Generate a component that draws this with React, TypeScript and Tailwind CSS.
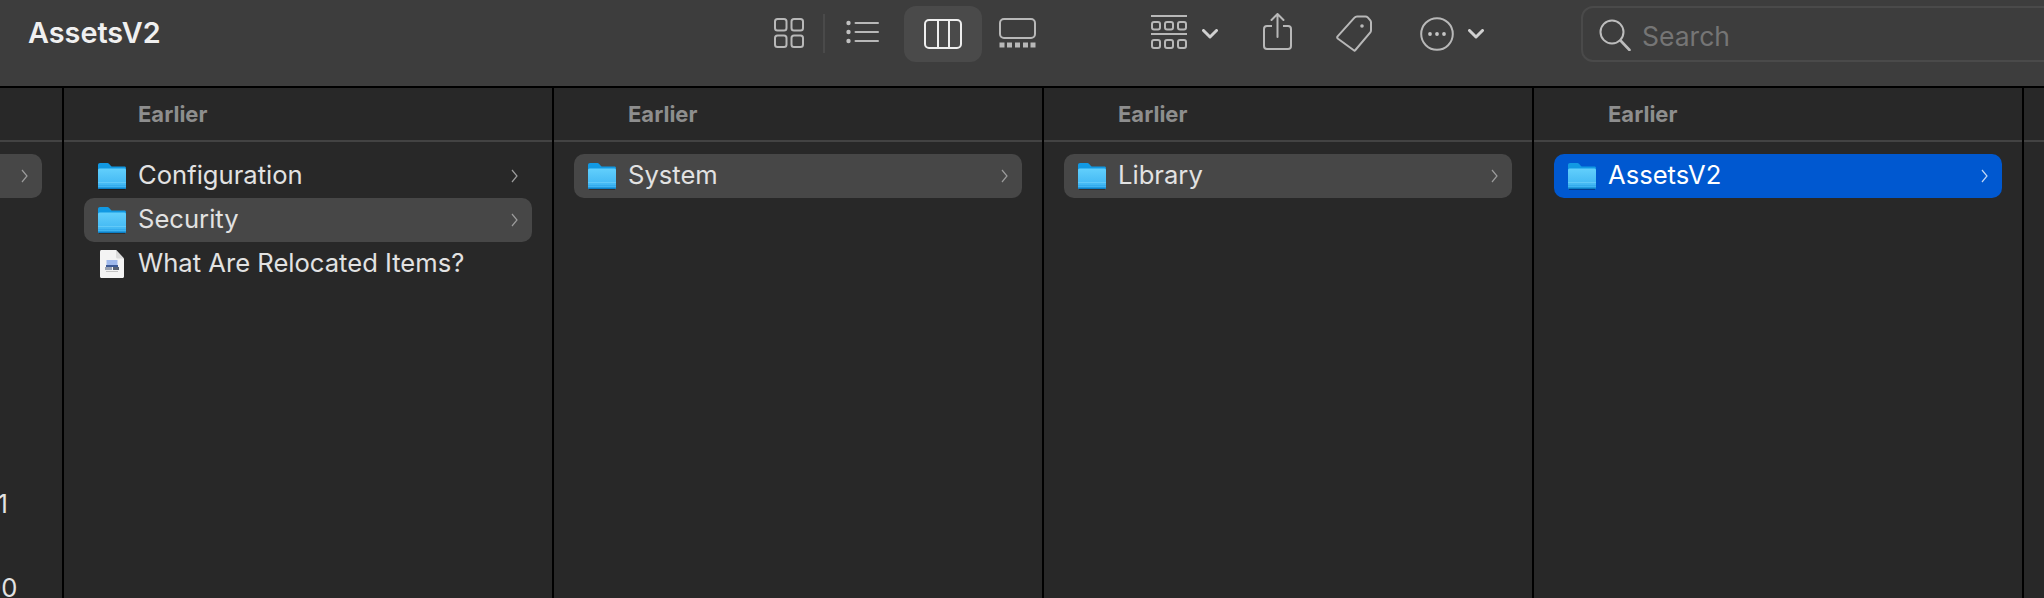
const FONT = "font-['Inter','Liberation_Sans',sans-serif]"

function FolderIcon() {
  return (
    <svg width="28" height="27" viewBox="0 0 28 27" className="shrink-0">
      <defs>
        <linearGradient id="folderBody" x1="0" y1="0" x2="0" y2="1">
          <stop offset="0" stopColor="#62cffc" />
          <stop offset="1" stopColor="#3ab2f1" />
        </linearGradient>
      </defs>
      <path d="M0 2.200C0 .9.8 0 2 0h7c1 0 1.500.4 2.200 1l1.800 1.900c.4.4.8.5 1.400.5H26.500c.9 0 1.500.6 1.500 1.500V12H0z" fill="#1199e3" />
      <rect x="0" y="5.500" width="28" height="20.500" rx="1.500" fill="url(#folderBody)" />
      <rect x="0" y="19" width="28" height="1" fill="#7ed8fc" opacity="0.5" />
      <rect x="0" y="22" width="28" height="1" fill="#2a9fe6" opacity="0.5" />
      <path d="M0 24.500h28v.3c0 .8-.6 1.200-1.500 1.200h-25C.6 26 0 25.600 0 24.800z" fill="#0c7fc6" />
      <rect x="1" y="26" width="26" height="1" fill="#000" opacity="0.3" />
    </svg>
  )
}

function DocIcon() {
  return (
    <svg width="24" height="28" viewBox="0 0 24 28" className="shrink-0">
      <path d="M1.500 0H16l8 8.500V26.500c0 .9-.6 1.500-1.500 1.500h-21C.6 28 0 27.400 0 26.500V1.500C0 .6.6 0 1.500 0z" fill="#f4f4f4" />
      <path d="M16 0l8 8.500h-6.500c-.9 0-1.500-.6-1.500-1.500z" fill="#dcdcdc" />
      <rect x="6.500" y="10" width="11" height="5" fill="#9fb9ec" />
      <rect x="6" y="15" width="12" height="2" fill="#3d5a96" />
      <rect x="5" y="17" width="7" height="3" fill="#9aa3b3" />
      <rect x="13" y="17" width="6" height="3" fill="#5a6473" />
      <rect x="6" y="21" width="12" height="1" fill="#c4c4c4" />
    </svg>
  )
}

function Chevron() {
  return (
    <svg width="7" height="14" viewBox="0 0 7 14" fill="none" className="shrink-0">
      <path d="M1 1l5 6-5 6" stroke="currentColor" strokeWidth="1.200" />
    </svg>
  )
}

function SmallChevron({ className }: { className: string }) {
  return (
    <svg width="16" height="10" viewBox="0 0 16 10" fill="none" className={className}>
      <path d="M1.500 1.500L8 8l6.500-6.500" stroke="#d0d0d0" strokeWidth="3" strokeLinecap="round" strokeLinejoin="round" />
    </svg>
  )
}

function Row({ name, icon, variant }: { name: string; icon?: 'doc'; variant?: 'hover' | 'selected' }) {
  const bg = variant === 'hover' ? 'bg-[#474747]' : variant === 'selected' ? 'bg-[#0058d0]' : ''
  return (
    <div className={`flex h-[44px] w-[448px] shrink-0 items-center rounded-[10px] pl-[14px] pr-[14px] ${bg}`}>
      {icon === 'doc' ? <div className="flex w-[28px] justify-center"><DocIcon /></div> : <FolderIcon />}
      <span className={`ml-[12px] mb-[2px] flex-1 text-[25.600px] leading-[42px] ${variant === 'selected' ? 'text-white' : 'text-[#e2e2e2]'}`}>
        {name}
      </span>
      {icon !== 'doc' && (
        <span className={variant === 'selected' ? 'text-[#c3d8f5]' : 'text-[#9c9c9c]'}>
          <Chevron />
        </span>
      )}
    </div>
  )
}

function ColumnHeader() {
  return (
    <div className="flex h-[54px] items-center border-b-2 border-[#434343] pl-[74px] text-[22px] font-bold text-[#8e8e8e]">
      Earlier
    </div>
  )
}

function Column({ children }: { children: React.ReactNode }) {
  return (
    <div className="h-full w-[490px] shrink-0 border-r-2 border-black">
      <ColumnHeader />
      <div className="px-[20px] pt-[12px]">{children}</div>
    </div>
  )
}

export default function App() {
  return (
    <div className={`flex h-[598px] w-[2044px] flex-col overflow-hidden bg-[#282828] ${FONT}`}>
      {/* Toolbar */}
      <div className="flex h-[88px] shrink-0 items-start border-b-2 border-black bg-[#3d3d3d]">
        <div className="w-[774px] shrink-0 pl-[28px] pt-[15px] text-[28.800px] font-semibold leading-[36px] text-[#f0f0f0]">
          AssetsV2
        </div>

        <svg width="30" height="30" viewBox="0 0 30 30" fill="none" stroke="#b8b8b8" strokeWidth="2" className="mt-[18px] shrink-0">
          <rect x="1" y="1" width="11.500" height="11.500" rx="2.500" />
          <rect x="17.500" y="1" width="11.500" height="11.500" rx="2.500" />
          <rect x="1" y="17.500" width="11.500" height="11.500" rx="2.500" />
          <rect x="17.500" y="17.500" width="11.500" height="11.500" rx="2.500" />
        </svg>
        <div className="ml-[19px] mt-[14px] h-[39px] w-[2px] shrink-0 bg-[#4a4a4a]" />
        <svg width="33" height="24" viewBox="0 0 33 24" fill="none" className="ml-[21px] mt-[20px] shrink-0">
          <g fill="#c0c0c0">
            <circle cx="2.500" cy="3" r="2.200" />
            <circle cx="2.500" cy="12" r="2.200" />
            <circle cx="2.500" cy="21" r="2.200" />
          </g>
          <g stroke="#b8b8b8" strokeWidth="2" strokeLinecap="round">
            <path d="M9.500 3H32" />
            <path d="M9.500 12H32" />
            <path d="M9.500 21H32" />
          </g>
        </svg>
        <div className="ml-[25px] mt-[6px] flex h-[56px] w-[78px] shrink-0 items-center justify-center rounded-[12px] bg-[#4a4a4a]">
          <svg width="38" height="30" viewBox="0 0 38 30" fill="none" stroke="#eeeeee" strokeWidth="2">
            <rect x="1" y="1" width="36" height="28" rx="4" />
            <path d="M14 1v28M25 1v28" />
          </svg>
        </div>
        <svg width="37" height="30" viewBox="0 0 37 30" fill="none" className="ml-[17px] mt-[18px] shrink-0">
          <rect x="1" y="1" width="35" height="19" rx="4" stroke="#b8b8b8" strokeWidth="2" />
          <g fill="#b8b8b8">
            <rect x="0.500" y="24.500" width="5" height="5" />
            <rect x="8" y="24.500" width="5" height="5" />
            <rect x="16" y="24.500" width="5" height="5" />
            <rect x="24" y="24.500" width="5" height="5" />
            <rect x="31.500" y="24.500" width="5" height="5" />
          </g>
        </svg>

        <svg width="36" height="35" viewBox="0 0 36 35" fill="none" stroke="#b8b8b8" strokeWidth="2" className="ml-[115px] mt-[15px] shrink-0">
          <path d="M0 1h36M0 19h36" />
          <rect x="1" y="7" width="8" height="7.500" rx="2" />
          <rect x="14" y="7" width="8" height="7.500" rx="2" />
          <rect x="27" y="7" width="8" height="7.500" rx="2" />
          <rect x="1" y="25" width="8" height="8" rx="2" />
          <rect x="14" y="25" width="8" height="8" rx="2" />
          <rect x="27" y="25" width="8" height="8" rx="2" />
        </svg>
        <SmallChevron className="ml-[15px] mt-[29px] shrink-0" />

        <svg width="29" height="37" viewBox="0 0 29 37" fill="none" stroke="#b8b8b8" strokeWidth="2" className="ml-[45px] mt-[13px] shrink-0">
          <path d="M9 13H4c-2 0-3 1-3 3v17c0 2 1 3 3 3h21c2 0 3-1 3-3V16c0-2-1-3-3-3h-5" />
          <path d="M14.500 24V1.500M8.500 7l6-6 6 6" strokeLinecap="round" strokeLinejoin="round" />
        </svg>
        <svg width="36" height="37" viewBox="0 0 36 37" fill="none" stroke="#b8b8b8" strokeWidth="2" className="ml-[44px] mt-[15px] shrink-0">
          <path d="M21 1.500h8.500c1 0 1.600.3 2.200.9l2.600 3c.5.6.7 1.200.7 2v7.800c0 .8-.2 1.400-.7 2.100L19 35.500l-.4.3-.5-.3L2 23.800c-1-.8-1.100-1.500-.4-2.400L18.500 2.700c.7-.8 1.500-1.200 2.500-1.200z" strokeLinejoin="round" />
          <circle cx="26" cy="11" r="1.800" fill="#b8b8b8" stroke="none" />
        </svg>
        <svg width="34" height="34" viewBox="0 0 34 34" fill="none" className="ml-[48px] mt-[17px] shrink-0">
          <circle cx="17" cy="17" r="15.800" stroke="#b8b8b8" strokeWidth="2" />
          <g fill="#c4c4c4">
            <circle cx="10" cy="17" r="1.900" />
            <circle cx="17" cy="17" r="1.900" />
            <circle cx="24" cy="17" r="1.900" />
          </g>
        </svg>
        <SmallChevron className="ml-[14px] mt-[29px] shrink-0" />

        <div className="ml-[97px] mt-[6px] flex h-[56px] w-[600px] shrink-0 items-center rounded-[12px] border-2 border-[#4a4a4a] pl-[16px]">
          <svg width="32" height="32" viewBox="0 0 32 32" fill="none" stroke="#bdbdbd" strokeWidth="2" className="mt-[2px] shrink-0">
            <circle cx="13" cy="13" r="11.500" />
            <path d="M21.500 21.500L30.500 31" strokeWidth="2.600" strokeLinecap="round" />
          </svg>
          <span className="ml-[11px] mt-[5px] text-[26.500px] text-[#757575]">Search</span>
        </div>
      </div>

      {/* Columns */}
      <div className="flex min-h-0 flex-1">
        <div className="h-full w-[64px] shrink-0 overflow-hidden border-r-2 border-black">
          <div className="h-[54px] border-b-2 border-[#434343]" />
          <div className="pt-[12px]">
            <div className="ml-[-406px]">
              <Row name="" variant="hover" />
            </div>
            <div className="ml-[-13px] mt-[291px] text-[25.600px] leading-[30px] text-[#e2e2e2]">11</div>
            <div className="ml-[-15px] mt-[54px] text-[25.600px] leading-[30px] text-[#e2e2e2]">00</div>
          </div>
        </div>
        <Column>
          <Row name="Configuration" />
          <Row name="Security" variant="hover" />
          <Row name="What Are Relocated Items?" icon="doc" />
        </Column>
        <Column>
          <Row name="System" variant="hover" />
        </Column>
        <Column>
          <Row name="Library" variant="hover" />
        </Column>
        <Column>
          <Row name="AssetsV2" variant="selected" />
        </Column>
        <div className="h-[54px] flex-1 border-b-2 border-[#434343]" />
      </div>
    </div>
  )
}
